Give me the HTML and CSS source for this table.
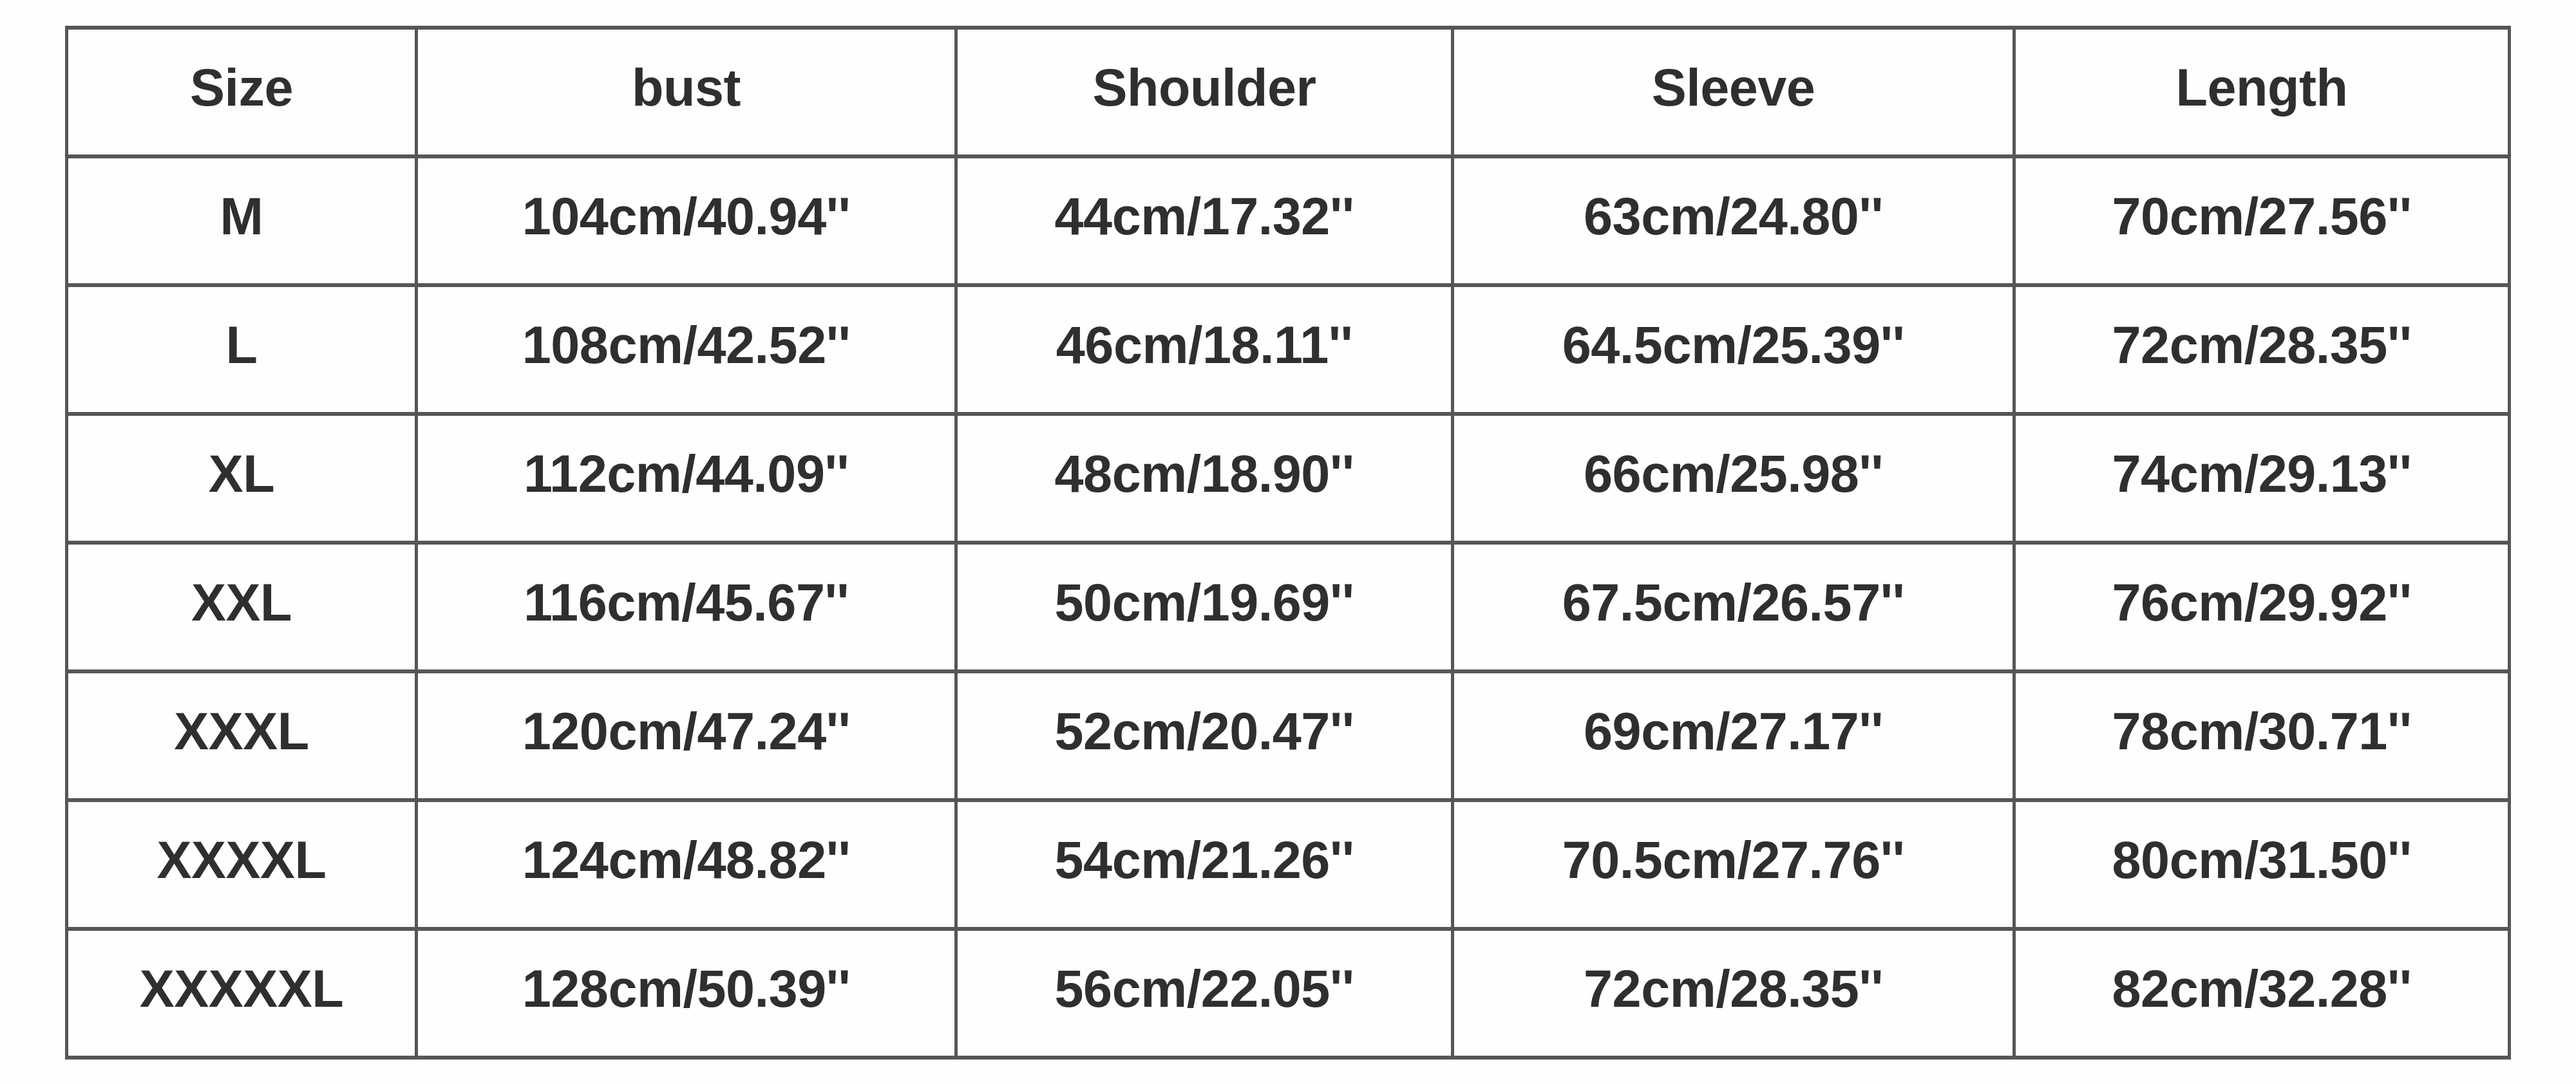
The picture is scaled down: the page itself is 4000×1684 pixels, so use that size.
FILE: index.html
```html
<!DOCTYPE html>
<html lang="en">
<head>
<meta charset="utf-8">
<title>Size chart</title>
<link rel="stylesheet" href="styles.css">
</head>
<body>
<div class="page">
  <div class="chart">
    <div class="cell">Size</div><div class="cell">bust</div><div class="cell">Shoulder</div><div class="cell">Sleeve</div><div class="cell">Length</div>
    <div class="cell">M</div><div class="cell">104cm/40.94''</div><div class="cell">44cm/17.32''</div><div class="cell">63cm/24.80''</div><div class="cell">70cm/27.56''</div>
    <div class="cell">L</div><div class="cell">108cm/42.52''</div><div class="cell">46cm/18.11''</div><div class="cell">64.5cm/25.39''</div><div class="cell">72cm/28.35''</div>
    <div class="cell">XL</div><div class="cell">112cm/44.09''</div><div class="cell">48cm/18.90''</div><div class="cell">66cm/25.98''</div><div class="cell">74cm/29.13''</div>
    <div class="cell">XXL</div><div class="cell">116cm/45.67''</div><div class="cell">50cm/19.69''</div><div class="cell">67.5cm/26.57''</div><div class="cell">76cm/29.92''</div>
    <div class="cell">XXXL</div><div class="cell">120cm/47.24''</div><div class="cell">52cm/20.47''</div><div class="cell">69cm/27.17''</div><div class="cell">78cm/30.71''</div>
    <div class="cell">XXXXL</div><div class="cell">124cm/48.82''</div><div class="cell">54cm/21.26''</div><div class="cell">70.5cm/27.76''</div><div class="cell">80cm/31.50''</div>
    <div class="cell">XXXXXL</div><div class="cell">128cm/50.39''</div><div class="cell">56cm/22.05''</div><div class="cell">72cm/28.35''</div><div class="cell">82cm/32.28''</div>
  </div>
</div>
</body>
</html>
```

FILE: styles.css
```css
html, body {
  margin: 0;
  padding: 0;
  background: #fefefe;
}

.page {
  width: 4000px;
  height: 1684px;
  padding: 40px 0 0 101px;
  box-sizing: border-box;
}

.chart {
  display: grid;
  grid-template-columns: 538px 833px 766px 867px 764px;
  grid-auto-rows: 194px;
  gap: 6px 5px;
  padding: 6px 5px;
  width: max-content;
  background: #565656;
}

.cell {
  background: #fefefe;
  display: flex;
  align-items: center;
  justify-content: center;
  padding-bottom: 14px;
  box-sizing: border-box;
  font-family: "Liberation Sans", Arial, sans-serif;
  font-weight: 700;
  font-size: 81px;
  letter-spacing: -0.5px;
  color: #2f2f2f;
  white-space: nowrap;
}
```
